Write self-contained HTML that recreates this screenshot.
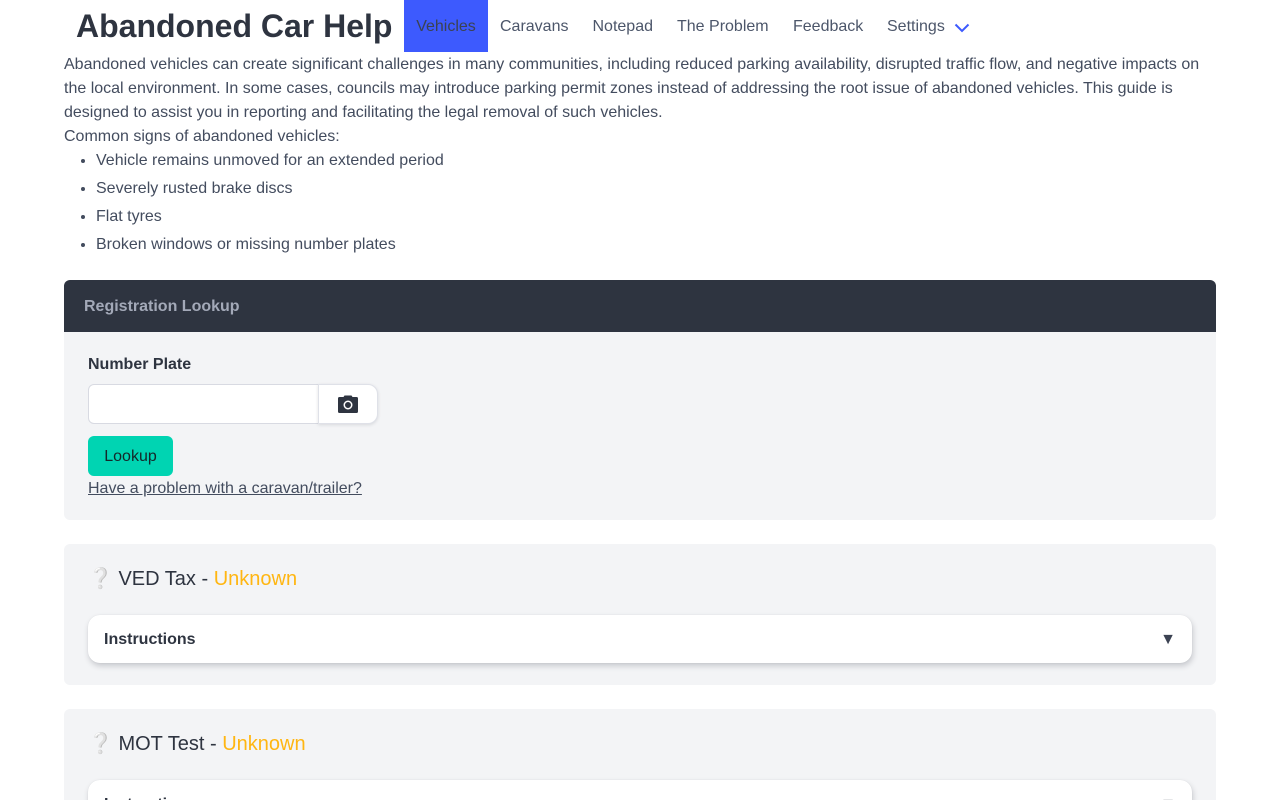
<!DOCTYPE html>
<html lang="en">
<head>
<meta charset="utf-8">
<title>Abandoned Car Help</title>
<style>
html{text-rendering:optimizeLegibility;-webkit-font-smoothing:antialiased;-moz-osx-font-smoothing:grayscale}
html,body{margin:0;padding:0;width:1280px;height:800px;overflow:hidden;background:#fff}
body{position:relative;font-family:"Liberation Sans",sans-serif;font-size:16px;line-height:24px;color:#434c5e}
*{box-sizing:border-box}
.abs{position:absolute;white-space:nowrap}
h1{position:absolute;left:76px;top:5px;margin:0;font-size:32px;line-height:42px;font-weight:700;color:#2e3440;white-space:nowrap}
.nav{position:absolute;top:1px;height:51px;line-height:52px;white-space:nowrap;color:#4c566a}
.active{left:404px;top:0;height:52px;width:84px;background:#3d5afe;text-align:center;color:#3b4252;line-height:54px}
p,ul{margin:0}
ul{position:absolute;left:64px;top:147px;padding-left:32px;width:1100px}
li{height:28px;line-height:28px}
.panel{position:absolute;left:64px;width:1152px;background:#f3f4f6;border-radius:6px}
.phead{position:absolute;left:0;top:0;width:1152px;height:52px;background:#2e3440;border-radius:6px 6px 0 0;color:#a3a9b8;font-weight:700;line-height:54px;padding-left:20px}
.input{position:absolute;left:88px;top:384px;width:231px;height:40px;background:#fff;border:1px solid #d8dae2;border-radius:6px 0 0 6px}
.cam{position:absolute;left:318px;top:384px;width:60px;height:40px;background:#fff;border:1px solid #dfe1e8;border-radius:0 10px 10px 0;box-shadow:0 1px 3px rgba(46,52,64,.14)}
.btn{position:absolute;left:88px;top:436px;width:85px;height:40px;background:#00d4b2;border-radius:6px;text-align:center;line-height:42px;color:#14282a}
.link{position:absolute;left:88px;top:477px;line-height:24px;color:#434c5e;text-decoration:underline;white-space:nowrap}
.title{position:absolute;left:88px;font-size:20px;line-height:28px;color:#2e3440;white-space:nowrap}
.title span{color:#ffb612}
.card{position:absolute;left:88px;width:1104px;height:48px;background:#fff;border-radius:12px;box-shadow:1px 3px 6px rgba(46,52,64,.22),0 0 1px rgba(46,52,64,.12);padding-left:16px;line-height:50px;font-weight:700;color:#2e3440}
.arrow{position:absolute;right:16px;top:0;font-weight:400;color:#3b4252}
</style>
</head>
<body>
<h1>Abandoned Car Help</h1>
<div class="nav active">Vehicles</div>
<div class="nav" style="left:500px">Caravans</div>
<div class="nav" style="left:592.5px">Notepad</div>
<div class="nav" style="left:677px">The Problem</div>
<div class="nav" style="left:793px">Feedback</div>
<div class="nav" style="left:887px">Settings</div>
<svg class="abs" style="left:954px;top:22px" width="16" height="12" viewBox="0 0 16 12"><path d="M1.5 2.5 L8 9 L14.5 2.5" fill="none" stroke="#3d5afe" stroke-width="2"/></svg>

<p class="abs" style="left:64px;top:53px">Abandoned vehicles can create significant challenges in many communities, including reduced parking availability, disrupted traffic flow, and negative impacts on</p>
<p class="abs" style="left:64px;top:77px">the local environment. In some cases, councils may introduce parking permit zones instead of addressing the root issue of abandoned vehicles. This guide is</p>
<p class="abs" style="left:64px;top:101px">designed to assist you in reporting and facilitating the legal removal of such vehicles.</p>
<p class="abs" style="left:64px;top:125px">Common signs of abandoned vehicles:</p>
<ul>
<li>Vehicle remains unmoved for an extended period</li>
<li>Severely rusted brake discs</li>
<li>Flat tyres</li>
<li>Broken windows or missing number plates</li>
</ul>

<div class="panel" style="top:280px;height:240px"><div class="phead">Registration Lookup</div></div>
<div class="abs" style="left:88px;top:353px;font-weight:700;color:#2e3440">Number Plate</div>
<div class="input"></div>
<div class="cam"></div>
<svg class="abs" style="left:338px;top:394px" width="20" height="20" viewBox="0 0 20 20"><path fill-rule="evenodd" fill="#2e3440" d="M6.5 1.5 H13.5 L14.5 3 H18.5 Q20 3 20 4.5 V17.5 Q20 19 18.5 19 H1.5 Q0 19 0 17.5 V4.5 Q0 3 1.5 3 H5.5 Z M10 6.5 A4.5 4.5 0 1 0 10 15.5 A4.5 4.5 0 1 0 10 6.5 Z M10 8 A3 3 0 1 1 10 14 A3 3 0 1 1 10 8 Z"/></svg>
<div class="btn">Lookup</div>
<div class="link">Have a problem with a caravan/trailer?</div>

<div class="panel" style="top:544px;height:141px"></div>
<div class="title" style="top:565px">❔ VED Tax - <span>Unknown</span></div>
<div class="card" style="top:615px">Instructions<div class="arrow">▼</div></div>

<div class="panel" style="top:709px;height:141px"></div>
<div class="title" style="top:730px">❔ MOT Test - <span>Unknown</span></div>
<div class="card" style="top:780px">Instructions<div class="arrow">▼</div></div>
</body>
</html>
